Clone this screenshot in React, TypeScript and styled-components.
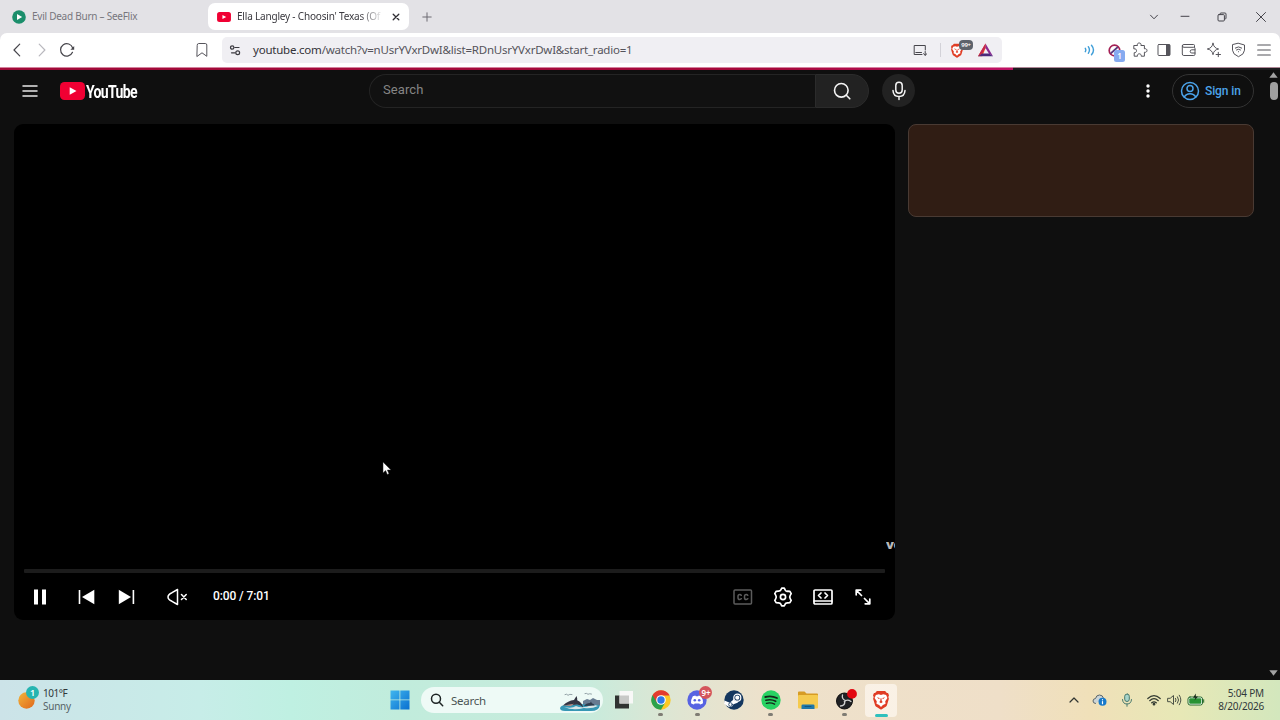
import React from "react";
import styled, { createGlobalStyle, css } from "styled-components";

const GlobalStyle = createGlobalStyle`
  * { box-sizing: border-box; }
  html, body { margin: 0; padding: 0; background: #0f0f0f; overflow: hidden; }
`;

const uiFont = `"Noto Sans", "Open Sans", sans-serif`;
const webFont = `Roboto, "Liberation Sans", sans-serif`;

const Screen = styled.div`
  width: 1280px;
  height: 720px;
  display: flex;
  flex-direction: column;
  overflow: hidden;
  font-family: ${uiFont};
`;

const Glyph = styled.svg<{ $ml?: number }>`
  display: block;
  flex: none;
  fill: none;
  stroke-linecap: round;
  stroke-linejoin: round;
  margin-left: ${(p) => p.$ml ?? 0}px;
`;

const Spacer = styled.div`
  flex: 1;
`;

/* Tab strip */
const TabStrip = styled.div`
  height: 33px;
  flex: none;
  background: #e3e2e6;
  display: flex;
  align-items: center;
  padding-right: 14px;
  color: #45444b;
`;

const Tab = styled.div<{ $active?: boolean }>`
  display: flex;
  align-items: center;
  height: 27px;
  flex: none;
  width: ${(p) => (p.$active ? 201 : 196)}px;
  margin-left: ${(p) => (p.$active ? 0 : 12)}px;
  padding: ${(p) => (p.$active ? "0 8px 0 9px" : "0")};
  border-radius: 7px;
  background: ${(p) => (p.$active ? "#fff" : "transparent")};
`;

const TabTitle = styled.div<{ $active?: boolean }>`
  margin: -1px 0 0 6px;
  font-size: 10px;
  line-height: 16px;
  white-space: nowrap;
  color: ${(p) => (p.$active ? "#3a393f" : "#77767d")};
  ${(p) =>
    p.$active
      ? css`
          width: 145px;
          letter-spacing: -0.19px;
          mask-image: linear-gradient(90deg, #000 122px, transparent 147px);
        `
      : css`
          letter-spacing: -0.25px;
        `}
`;

/* Toolbar */
const ToolbarBacking = styled.div`
  height: 34px;
  flex: none;
  background: #e3e2e6;
`;

const Toolbar = styled.div`
  height: 34px;
  background: #fff;
  border-radius: 7px 7px 0 0;
  display: flex;
  align-items: center;
  padding: 0 9px 0 10px;
  color: #55545b;
`;

const AddressBar = styled.div`
  width: 780px;
  height: 26px;
  margin-left: 13px;
  padding: 0 9px 0 7px;
  border-radius: 5px;
  background: #f0eff3;
  display: flex;
  align-items: center;
`;

const Url = styled.div`
  margin-left: 12px;
  font-size: 11.5px;
  line-height: 18px;
  letter-spacing: -0.22px;
  white-space: nowrap;
  color: #55545b;
  b { font-weight: 400; color: #333238; }
`;

const Divider = styled.div`
  width: 1px;
  height: 14px;
  margin-left: 13px;
  background: #d3d2d8;
`;

const BadgeHost = styled.div<{ $ml: number }>`
  position: relative;
  flex: none;
  margin-left: ${(p) => p.$ml}px;
`;

const CountBadge = styled.span<{ $kind: "shield" | "extension" | "chat" | "weather" }>`
  position: absolute;
  display: flex;
  align-items: center;
  justify-content: center;
  color: #fff;
  font-weight: 600;
  ${(p) =>
    ({
      shield: css`left: 9px; top: -3px; width: 14px; height: 10px; border-radius: 4px; background: #5d626b; font-size: 6px; letter-spacing: -0.3px;`,
      extension: css`left: 6px; top: 6px; width: 11px; height: 12px; border-radius: 2.5px; background: #86aaf0; font-size: 8px;`,
      chat: css`left: 12px; top: -4px; width: 13px; height: 13px; border-radius: 50%; background: #d4555b; font-size: 8px; letter-spacing: -0.3px;`,
      weather: css`left: 8px; top: -6px; width: 13px; height: 13px; border-radius: 50%; background: #26b5b1; font-size: 9px;`,
    })[p.$kind]}
`;

/* Web page */
const LoadLine = styled.div`
  height: 3px;
  flex: none;
  background: linear-gradient(90deg, #a00a38 0, #a6093b 780px, #bf1266 1013px, #1d1c1f 1013px);
  border-top: 1px solid rgba(235, 180, 200, 0.7);
`;

const Page = styled.main`
  height: 610px;
  flex: none;
  background: #0f0f0f;
  display: flex;
  font-family: ${webFont};
  color: #fff;
`;

const Content = styled.div`
  width: 1267px;
  display: flex;
  flex-direction: column;
`;

const Masthead = styled.header`
  height: 54px;
  flex: none;
  display: flex;
  align-items: flex-start;
  padding: 4px 13px 0 22px;
`;

const MastheadRow = styled.div`
  height: 33px;
  width: 100%;
  display: flex;
  align-items: center;
`;

const Brand = styled.div`
  display: flex;
  align-items: center;
  width: 100px;
  margin-left: 22px;
`;

const BrandName = styled.span`
  margin: 2px 0 0 1px;
  font-family: Roboto, sans-serif;
  font-weight: 700;
  font-size: 18.5px;
  line-height: 22px;
  letter-spacing: -0.9px;
  transform: scaleX(0.76);
  transform-origin: left center;
`;

const SearchField = styled.div`
  width: 446px;
  height: 34px;
  margin-left: 209px;
  padding-left: 13px;
  border: 1px solid #242424;
  border-right: 0;
  border-radius: 17px 0 0 17px;
  background: #111;
  color: #858585;
  font-size: 13px;
  line-height: 30px;
  letter-spacing: 0.1px;
`;

const SearchButton = styled.div`
  width: 54px;
  height: 34px;
  border: 1px solid #2b2b2b;
  border-radius: 0 17px 17px 0;
  background: #222;
  display: flex;
  align-items: center;
  justify-content: center;
`;

const MicButton = styled.div`
  width: 33px;
  height: 33px;
  margin-left: 13px;
  border-radius: 50%;
  background: #222;
  display: flex;
  align-items: center;
  justify-content: center;
`;

const SignIn = styled.div`
  width: 82px;
  height: 34px;
  margin-left: 22px;
  padding-left: 7px;
  border: 1px solid #333;
  border-radius: 17px;
  display: flex;
  align-items: center;
  gap: 5px;
  color: #4ba3ea;
  font-size: 12px;
  font-weight: 500;
  letter-spacing: -0.1px;
`;

const Columns = styled.div`
  display: flex;
  padding-left: 14px;
  gap: 13px;
`;

const Player = styled.section`
  width: 881px;
  height: 496px;
  border-radius: 9px;
  background: #000;
  overflow: hidden;
  display: flex;
  flex-direction: column;
  justify-content: flex-end;
  padding: 0 10px;
`;

const Watermark = styled.div`
  width: 9px;
  height: 14px;
  align-self: flex-end;
  margin: 0 -10px 17px 0;
  overflow: hidden;
  white-space: nowrap;
  color: #b9b9b9;
  font: 800 13px/13px "Open Sans", sans-serif;
  letter-spacing: -0.5px;
`;

const SeekBar = styled.div`
  height: 4px;
  flex: none;
  border-radius: 1px;
  background: #1c1c1c;
`;

const Controls = styled.div`
  height: 47px;
  flex: none;
  display: flex;
  align-items: center;
  padding: 0 14.5px 0 9px;
`;

const Time = styled.span`
  margin: -1px 0 0 26.5px;
  font-size: 12px;
  font-weight: 500;
  letter-spacing: -0.12px;
`;

const Placeholder = styled.aside`
  width: 346px;
  height: 93px;
  border-radius: 8px;
  border: 1px solid #493a33;
  background: #301d14;
`;

const Scrollbar = styled.div`
  width: 13px;
  display: flex;
  flex-direction: column;
  align-items: center;
  padding: 2px 0 4px;
`;

const Thumb = styled.div`
  width: 8px;
  height: 18px;
  margin-top: 4px;
  border-radius: 4px;
  background: #9f9f9f;
`;

const Pointer = styled.svg`
  position: absolute;
  left: 382px;
  top: 461px;
`;

/* Taskbar */
const Taskbar = styled.footer`
  height: 40px;
  flex: none;
  display: flex;
  align-items: center;
  padding: 0 16px 0 18px;
  background: linear-gradient(90deg, #cce3e8 0, #c7ede8 200px, #bff0e2 290px, #c1ecdc 400px, #c8ebdc 590px, #e0e5d2 680px, #eee1cb 770px, #efdfc8 1000px, #f0e0b9 1090px, #e7e8b6 1180px, #d3e7bd 1280px);
  color: #30383a;
`;

const Weather = styled.div`
  margin-left: 8px;
  width: 312px;
  font-size: 10px;
  line-height: 13.5px;
  letter-spacing: -0.5px;
  div + div { color: #566366; letter-spacing: -0.25px; }
`;

const TaskSearch = styled.div`
  width: 182px;
  height: 26px;
  margin-left: 11.5px;
  padding-left: 9px;
  border-radius: 13px;
  background: #eefaf6;
  display: flex;
  align-items: center;
  overflow: hidden;
  font-size: 11.5px;
  letter-spacing: -0.25px;
  color: #4b5554;
  span { margin-left: 7px; width: 108px; }
`;

const AppSlot = styled.div<{ $state?: "open" | "focused" }>`
  position: relative;
  width: 32px;
  height: 33px;
  margin-left: 4.8px;
  flex: none;
  display: flex;
  align-items: center;
  justify-content: center;
  border-radius: 4px;
  background: ${(p) => (p.$state === "focused" ? "rgba(255,250,245,.65)" : "transparent")};
  &::after {
    content: "";
    position: absolute;
    bottom: ${(p) => (p.$state === "focused" ? 0 : 1)}px;
    height: 2.5px;
    border-radius: 2px;
    width: ${(p) => (p.$state === "focused" ? 13 : p.$state === "open" ? 5 : 0)}px;
    background: ${(p) => (p.$state === "focused" ? "#2fc0bd" : "#7f7c74")};
  }
`;

const Clock = styled.div`
  width: 59px;
  white-space: nowrap;
  font-size: 10px;
  line-height: 13.5px;
  letter-spacing: -0.2px;
  display: flex;
  flex-direction: column;
  align-items: flex-end;
`;

type IconProps = {
  w?: number;
  h?: number;
  box?: string;
  ml?: number;
  c?: string;
  sw?: number;
  children: React.ReactNode;
};

const Icon = ({ w = 16, h = 16, box, ml, c = "currentColor", sw = 1, children }: IconProps) => (
  <Glyph width={w} height={h} viewBox={box ?? `0 0 ${w} ${h}`} $ml={ml} stroke={c} strokeWidth={sw}>
    {children}
  </Glyph>
);

const lionFace = (
  <>
    <path d="M4.3 1h7.4l1.6 1.8 1-.1.9 2.1-.6 1.5.5 1.6-1.7 5.5c-.3.9-.8 1.3-1.6 1.9L8.7 17.4c-.5.3-.9.3-1.4 0l-3.1-2.1c-.8-.6-1.3-1-1.6-1.9L.9 7.9l.5-1.6L.8 4.8l.9-2.1 1 .1z" fill="#e03c24" stroke="none" />
    <path d="M3.4 4.5 6 3.8l2 .7 2-.7 2.6.7 1.2 2.7-2 3 .3 2.2-2.4 1.2L8 15.2l-1.7-1.6-2.4-1.2.3-2.2-2-3z" fill="#fff" stroke="none" />
    <path d="M4.2 6.6 6.8 7.2 6.3 8.3zM11.8 6.6 9.2 7.2l.5 1.1zM7.6 7.5h.8L8.7 10l.9.8L8 12l-1.600-1.200.9-.8z" fill="#e03c24" stroke="none" />
  </>
);

const tubeBadge = (
  <>
    <rect x="0" y="0" width="25" height="18" rx="4.5" fill="#f00033" stroke="none" />
    <path d="M9.7 5.2v7.600l6.800-3.800z" fill="#fff" stroke="none" />
  </>
);

function BrowserChrome() {
  return (
    <>
      <TabStrip>
        <Tab>
          <Icon w={14} h={14}>
            <circle cx="7" cy="7" r="6.8" fill="#1b8e6b" stroke="none" />
            <path d="M5 4v6l5.2-3z" fill="#fff" stroke="none" />
          </Icon>
          <TabTitle>Evil Dead Burn – SeeFlix</TabTitle>
        </Tab>
        <Tab $active>
          <Icon w={14} h={10} box="0 0 25 18">{tubeBadge}</Icon>
          <TabTitle $active>Ella Langley - Choosin' Texas (Of</TabTitle>
          <Icon w={8} h={8} ml={9.5} c="#2e2d33" sw={1.3}><path d="M1.2 1.2l5.6 5.6M6.8 1.2 1.2 6.8" /></Icon>
        </Tab>
        <Icon w={10} h={10} ml={13} c="#6c6b72"><path d="M5 .8v8.4M.8 5h8.4" /></Icon>
        <Spacer />
        <Icon w={10} h={8}><path d="M1.5 2.2 5 5.8l3.5-3.6" /></Icon>
        <Icon w={10} h={10} ml={21}><path d="M1 4.3h8" /></Icon>
        <Icon w={10} h={10} ml={27}>
          <rect x="1" y="2.6" width="6.4" height="6.4" rx="1" />
          <path d="M3 2.4V2q0-1 1-1h4q1 0 1 1v4.2q0 .8-1 .9" />
        </Icon>
        <Icon w={10} h={10} ml={29}><path d="M.5.5l9 9M9.5.5l-9 9" /></Icon>
      </TabStrip>
      <ToolbarBacking>
        <Toolbar>
          <Icon w={14} h={14} sw={1.2} c="#46454b"><path d="M9.7 1.2 4 7l5.7 5.8" /></Icon>
          <Icon w={14} h={14} ml={11} sw={1.2} c="#b9b8be"><path d="M4.2 1.2 9.9 7l-5.7 5.8" /></Icon>
          <Icon w={16} h={16} ml={10} sw={1.2} c="#46454b">
            <path d="M13.5 10.3A6.2 6.2 0 1 1 13.7 6" />
            <path d="M15.2 4v3.8h-3.8z" fill="#46454b" stroke="none" />
          </Icon>
          <Icon w={14} h={16} ml={120}><path d="M2.2 3q0-1.500 1.500-1.500h6.600q1.500 0 1.500 1.500v11.300L7 10.800l-4.800 3.500z" /></Icon>
          <AddressBar>
            <Icon w={12} h={12} sw={1.2} c="#3c3b41">
              <circle cx="3.2" cy="3.5" r="1.7" /><path d="M5.8 3.5H10" />
              <circle cx="8.7" cy="8.8" r="1.9" /><path d="M2.5 8.8h3.5" />
            </Icon>
            <Url><b>youtube.com</b>/watch?v=nUsrYVxrDwI&amp;list=RDnUsrYVxrDwI&amp;start_radio=1</Url>
            <Spacer />
            <Icon w={14} h={12} c="#46454b">
              <path d="M12.3 6V1.5H1.2v9H9M2.8 8.500h5.700M12.2 7.5v3.7M10.5 9.700l1.700 1.600 1.700-1.600" />
            </Icon>
            <Divider />
            <BadgeHost $ml={9}>
              <Icon w={14} h={15} box="0 0 16 18">{lionFace}</Icon>
              <CountBadge $kind="shield">99+</CountBadge>
            </BadgeHost>
            <Icon w={15} h={14} ml={14}>
              <path d="M7.5.5 0 13.3h4.2L7.5 5.3z" fill="#ee4a26" stroke="none" />
              <path d="M7.5.5 15 13.3 11 10.7 7.5 5z" fill="#8b2a92" stroke="none" />
              <path d="M0 13.3h15l-4-2.800H4z" fill="#4b2a7c" stroke="none" />
              <path d="M7.5.5 0 13.3l4-2.800L7.600 4.500z" fill="#c3274f" stroke="none" />
            </Icon>
          </AddressBar>
          <Spacer />
          <Icon w={12} h={12} c="#3f9ed8" sw={1.4}>
            <path d="M1.300 4.300q1 1.700 0 3.400M4.300 2.700q2.300 3.300 0 6.600M7.500 1.200q4 4.800 0 9.600" />
          </Icon>
          <BadgeHost $ml={12.5}>
            <Icon w={13} h={13} c="#a52055" sw={1.7}>
              <circle cx="6.5" cy="6.5" r="5.3" />
              <path d="M3.2 9 9.3 3.5" stroke="#5b3b7e" />
            </Icon>
            <CountBadge $kind="extension">1</CountBadge>
          </BadgeHost>
          <Icon w={16} h={16} ml={10.5}>
            <path d="M2.200 3.500h3.300C4.900 1.800 6 1 7.200 1s2.300.8 1.700 2.500h3.500v3.300c1.500-.5 2.600.5 2.600 1.700s-1.100 2.200-2.600 1.700v4H9.200c.4-1.500-.7-2.400-1.900-2.400s-2.200.9-1.800 2.400H2.200v-3.500c1.500.3 2.300-.8 2.300-2s-.8-2.200-2.300-1.900z" />
          </Icon>
          <Icon w={14} h={14} ml={9}>
            <rect x="1" y="1.5" width="12" height="11" rx="1" />
            <rect x="9" y="1.5" width="4" height="11" fill="currentColor" stroke="none" />
          </Icon>
          <Icon w={16} h={14} ml={10}>
            <path d="M13.500 4V2.500Q13.500 1.500 12.500 1.500H3Q1.300 1.500 1.300 3v8q0 1.500 1.500 1.500h10q1.200 0 1.200-1.200V5.500q0-1.200-1.200-1.200H3Q1.300 4.300 1.300 3" />
            <path d="M14 6.800h-3.200q-1.600 0-1.600 1.600t1.600 1.600H14" />
          </Icon>
          <Icon w={16} h={16} ml={9}>
            <path d="M7 1.300q.7 4.900 5.600 5.700Q7.700 7.800 7 12.700 6.300 7.800 1.300 7 6.300 6.200 7 1.300zM12.300 10.300v4.400M10.100 12.500h4.400" />
          </Icon>
          <Icon w={15} h={16} ml={9.5}>
            <path d="M7.500 1.300 13.500 3v5.200q0 4-6 6.500-6-2.500-6-6.500V3z" />
            <path d="M4.300 6q3.200-2.400 6.400 0M5.500 7.900q2-1.500 4 0M7.500 9.700v.1" />
          </Icon>
          <Icon w={14} h={12} ml={11} sw={1.2}><path d="M.7 1h12.6M.7 6h12.6M.7 11h12.6" /></Icon>
        </Toolbar>
      </ToolbarBacking>
    </>
  );
}

function WatchPage() {
  return (
    <Page>
      <Content>
        <Masthead>
          <MastheadRow>
            <Icon w={16} h={12} sw={1.5} c="#e8e8e8"><path d="M1 1h14M1 6h14M1 11h14" /></Icon>
            <Brand>
              <Icon w={25} h={18}>{tubeBadge}</Icon>
              <BrandName>YouTube</BrandName>
            </Brand>
            <SearchField>Search</SearchField>
            <SearchButton>
              <Icon w={20} h={20} sw={1.6} c="#f4f4f4"><circle cx="9.3" cy="9.3" r="6.8" /><path d="M14.3 14.300l3.500 3.500" /></Icon>
            </SearchButton>
            <MicButton>
              <Icon w={16} h={20} sw={1.5} c="#f4f4f4"><rect x="4.8" y="1.3" width="6.4" height="11" rx="3.2" /><path d="M2 9.500q.3 6 6 6t6-6M8 15.500v3" /></Icon>
            </MicButton>
            <Spacer />
            <Icon w={4} h={16}>
              <g fill="#fff" stroke="none"><circle cx="2" cy="3" r="1.7" /><circle cx="2" cy="8" r="1.7" /><circle cx="2" cy="13" r="1.7" /></g>
            </Icon>
            <SignIn>
              <Icon w={20} h={20} sw={1.5}><circle cx="10" cy="10" r="8.5" /><circle cx="10" cy="7.5" r="3" /><path d="M4.300 16q1.700-3.300 5.700-3.300t5.700 3.300" /></Icon>
              Sign in
            </SignIn>
          </MastheadRow>
        </Masthead>
        <Columns>
          <Player>
            <Watermark>ve</Watermark>
            <SeekBar />
            <Controls>
              <Icon w={14} h={16}><path d="M1 .5h4v15H1zM9 .5h4v15H9z" fill="#fff" stroke="none" /></Icon>
              <Icon w={17} h={16} ml={31}><path d="M1.500 1v14" stroke="#fff" strokeWidth="1.6" strokeLinecap="butt" /><path d="M16.300.8v14.400L4 8z" fill="#fff" stroke="none" /></Icon>
              <Icon w={17} h={16} ml={23}><path d="M15.400 1v14" stroke="#fff" strokeWidth="1.6" strokeLinecap="butt" /><path d="M.8.8v14.400L13 8z" fill="#fff" stroke="none" /></Icon>
              <Icon w={20} h={18} ml={31.5} c="#fff" sw={1.5}><path d="M10.500 1.500v15L5 13.300Q1 11.500 1 9t4-4.300zM14.500 6.500l4.700 5M19.200 6.500l-4.700 5" /></Icon>
              <Time>0:00 / 7:01</Time>
              <Spacer />
              <Icon w={20} h={16} c="#5c5c5c" sw={1.5}><rect x="1" y="1" width="17.5" height="14" rx="1" /><path d="M8.300 6.300Q7.800 5.500 6.800 5.500 5 5.500 5 7.300v1.400q0 1.800 1.800 1.800 1 0 1.500-.8M14.800 6.300q-.5-.8-1.500-.8-1.800 0-1.800 1.800v1.400q0 1.800 1.800 1.800 1 0 1.500-.8" /></Icon>
              <Icon w={20} h={20} ml={20} c="#fff" sw={1.7}><path d="M8 2.600 8.700 1.200h2.600l.7 1.400q.3 1.300 1.700 1.700l1.200-.2 2 .2 1.300 2.300-.9 1.600q-1.200 1.800 0 3.600l.9 1.600-1.300 2.300-2 .2q-2.300-.2-2.900 1.500l-.7 1.400H8.700L8 17.400q-.7-1.700-2.900-1.500l-2-.2-1.300-2.300.9-1.600q1.200-1.800 0-3.600l-.9-1.600 1.300-2.300 2-.2Q7.300 4.300 8 2.600z" /><circle cx="10" cy="10" r="2.6" /></Icon>
              <Icon w={20} h={16} ml={20} c="#fff" sw={1.7}><rect x="1" y="1" width="18" height="14" rx="1" /><path d="M1 12h18M8 4 5.500 6.500 8 9M12 4l2.500 2.500L12 9" /></Icon>
              <Icon w={16} h={16} ml={22} c="#fff" sw={1.7}><path d="M1.200 5.800V1.200h4.600M1.200 1.200l5.300 5.300M14.800 10.200v4.600h-4.600M14.800 14.800 9.500 9.500" /></Icon>
            </Controls>
          </Player>
          <Placeholder />
        </Columns>
      </Content>
      <Scrollbar>
        <Icon w={9} h={6}><path d="M4.5.3 8.7 5.800H.3z" fill="#a3a3a3" stroke="none" /></Icon>
        <Thumb />
        <Spacer />
        <Icon w={9} h={6}><path d="M.3.2h8.400L4.500 5.700z" fill="#a3a3a3" stroke="none" /></Icon>
      </Scrollbar>
    </Page>
  );
}

function SystemTaskbar() {
  return (
    <Taskbar>
      <BadgeHost $ml={0}>
        <Icon w={17} h={17}>
          <defs><linearGradient id="sun" x1="0" y1="0" x2="1" y2="1"><stop offset="0" stopColor="#f2b53b" /><stop offset="1" stopColor="#e0671b" /></linearGradient></defs>
          <circle cx="8.5" cy="8.5" r="8.2" fill="url(#sun)" stroke="none" />
        </Icon>
        <CountBadge $kind="weather">1</CountBadge>
      </BadgeHost>
      <Weather><div>101°F</div><div>Sunny</div></Weather>
      <Icon w={20} h={20} ml={34.5}>
        <defs><linearGradient id="pane" x1="0" y1="0" x2="1" y2="1"><stop offset="0" stopColor="#41b6ee" /><stop offset="1" stopColor="#0a6fd0" /></linearGradient></defs>
        <path d="M.5.5h9v9h-9zM10.300.5h9.200v9h-9.200zM.5 10.300h9v9.200h-9zM10.300 10.300h9.200v9.200h-9.200z" fill="url(#pane)" stroke="none" />
      </Icon>
      <TaskSearch>
        <Icon w={14} h={14} c="#1d2424" sw={1.5}><circle cx="6" cy="5.8" r="4.5" /><path d="M9.300 9.300l3.400 3.400" /></Icon>
        <span>Search</span>
        <Icon w={43} h={26}>
          <path d="M24 14l4-2 3 1 3-2 4 2 3 0v5l-17 2z" fill="#677b91" stroke="none" />
          <path d="M1 21q1-3 6-3l13-1 21 1q-1 6-9 6H6q-5 0-5-3z" fill="#3697b4" stroke="none" />
          <path d="M5 20q8 2 12-1 6 3 16-1 4 0 6 1-6 3-14 2Q14 24 5 20z" fill="#d9e6e8" stroke="none" />
          <path d="M4 18.500q5-5 11-5.500l2.500-4q1 2 .7 4.300 5 2.200 6 7.200-3-3-6-3-6 1-14.200 1z" fill="#343543" stroke="none" />
          <path d="M5 18.500q6-1 10-1.700l-3 2.200z" fill="#b78d86" stroke="none" />
          <path d="M25 19q2-3 6-3l1-1.500.8 1.700q2 .5 3 2.300z" fill="#2f3b4d" stroke="none" />
          <path d="M6 7.500q2-1 3 .8 1.500-1.500 4-.8M26 6.500q2-.6 3 .8 1.500-1 3.500-.3" stroke="#88969d" strokeWidth=".9" />
        </Icon>
      </TaskSearch>
      <AppSlot>
        <Icon w={20} h={20}><rect x="1" y="5.5" width="14" height="13" fill="#303331" stroke="none" /><rect x="5.5" y="1" width="13.5" height="12.5" fill="#f8f8f7" stroke="none" /><path d="M5.500 5.500H15v8H5.500z" fill="#c8c9c7" stroke="none" /></Icon>
      </AppSlot>
      <AppSlot $state="open">
        <Icon w={20} h={20}>
          <g stroke="none">
            <circle cx="10" cy="10" r="9.7" fill="#fbc924" />
            <path d="M1.600 5.100A9.700 9.700 0 0 0 10 19.700L14.200 12.400 10 10z" fill="#2ba24c" />
            <path d="M1.600 5.100A9.700 9.700 0 0 1 18.400 5.100L18.500 5.500H10v5L5.800 12.400z" fill="#e33b2e" />
            <circle cx="10" cy="10" r="4.8" fill="#fff" /><circle cx="10" cy="10" r="3.7" fill="#2f78e8" />
          </g>
        </Icon>
      </AppSlot>
      <AppSlot $state="open">
        <BadgeHost $ml={0}>
          <Icon w={20} h={20}>
            <circle cx="10" cy="10" r="9.7" fill="#5763e2" stroke="none" />
            <path d="M5.800 6.200 8.300 5.400l.5.900h2.400l.5-.9 2.500.8q2 3.300 1.800 7-1.300 1-2.900 1.400l-.8-1.200H7.700l-.8 1.200Q5.300 14.200 4 13.200q-.2-3.700 1.800-7z" fill="#fff" stroke="none" />
            <g fill="#5763e2" stroke="none"><circle cx="7.8" cy="10.3" r="1.3" /><circle cx="12.2" cy="10.3" r="1.3" /></g>
          </Icon>
          <CountBadge $kind="chat">9+</CountBadge>
        </BadgeHost>
      </AppSlot>
      <AppSlot>
        <Icon w={20} h={20}>
          <circle cx="10" cy="10" r="9.7" fill="#14375f" stroke="none" />
          <path d="M.4 10.500 5.800 12.800 9 10l1.500-3.500h4l1.500 3-2.500 3.300-4 1.500-1.500 2.200-3 .5-3-1.700-1.900-1.500Q.6 12.500.4 10.500z" fill="#fff" stroke="none" />
          <circle cx="13.3" cy="7.7" r="3.5" fill="#14375f" stroke="#fff" strokeWidth="1.2" />
          <circle cx="13.3" cy="7.7" r="2.1" fill="#fff" stroke="none" />
          <circle cx="6.5" cy="14.5" r="1.8" stroke="#14375f" strokeWidth=".8" />
        </Icon>
      </AppSlot>
      <AppSlot $state="open">
        <Icon w={20} h={20}>
          <circle cx="10" cy="10" r="9.7" fill="#28d263" stroke="none" />
          <path d="M4.300 7q6-1.700 11.600 1" stroke="#14291b" strokeWidth="1.9" />
          <path d="M4.900 10.300q5.300-1.400 9.800 1" stroke="#14291b" strokeWidth="1.6" />
          <path d="M5.400 13.300q4.400-1.100 8.200.9" stroke="#14291b" strokeWidth="1.3" />
        </Icon>
      </AppSlot>
      <AppSlot>
        <Icon w={20} h={18}>
          <path d="M0 1.500Q0 .5 1 .5h5.500l2 2H19q1 0 1 1V9H0z" fill="#d79c24" stroke="none" />
          <rect y="4" width="20" height="13.5" rx="1" fill="#f5ca4e" stroke="none" />
          <path d="M3.500 18v-3.200q0-1.300 1.300-1.300h10.400q1.300 0 1.300 1.300V18z" fill="#1e78ab" stroke="none" />
          <path d="M7 15.500h6" stroke="#145680" />
        </Icon>
      </AppSlot>
      <AppSlot $state="open">
        <Icon w={24} h={22}>
          <circle cx="11.5" cy="12" r="8" fill="#202124" stroke="#111" />
          <path d="M9.500 6q-1 4 3 5.500M18 12.500q-4-2.800-6.700.3M7.500 17q4.500-.3 4.300-4.500" stroke="#d2d2d2" strokeWidth="1.3" />
          <circle cx="19" cy="4.9" r="4.9" fill="#e30711" stroke="none" />
        </Icon>
      </AppSlot>
      <AppSlot $state="focused">
        <Icon w={18} h={20} box="0 0 16 18">{lionFace}</Icon>
      </AppSlot>
      <Spacer />
      <Icon w={10} h={8} c="#303532" sw={1.2}><path d="M1 6 5 2l4 4" /></Icon>
      <Icon w={16} h={14} ml={13}>
        <path d="M3.500 10.500Q1 10.300 1 8t2.500-2.500Q4.300 2 7.500 2t4 3" fill="#cbd4d6" stroke="#59656b" />
        <circle cx="10.5" cy="8.8" r="4" fill="#187acb" stroke="none" />
        <path d="M10.500 8.500v2.200M10.500 6.700v.1" stroke="#fff" strokeWidth="1.2" />
      </Icon>
      <Icon w={12} h={14} ml={13} c="#47796d"><rect x="3.7" y="1" width="4.6" height="7.5" rx="2.3" fill="#a7d4cb" /><path d="M1.500 6.500q.2 4.500 4.500 4.500t4.500-4.500M6 11v2.300" /></Icon>
      <Icon w={14} h={12} ml={14} c="#333b31" sw={1.2}><path d="M.8 4.500q6.200-5.700 12.400 0M2.700 6.700q4.300-4 8.600 0M4.700 8.800q2.300-2 4.600 0" /><circle cx="7" cy="10.2" r=".8" fill="#333b31" /></Icon>
      <Icon w={15} h={12} ml={6} c="#4a5145"><path d="M1 4.300h2.200L6.500 1.500v9L3.200 7.700H1zM8.500 4.300q1.300 1.700 0 3.400M10.500 2.800q2.300 3.200 0 6.400M12.300 1.200q3.300 4.800 0 9.600" /></Icon>
      <Icon w={18} h={14} ml={5}>
        <rect x="1" y="4" width="14.5" height="8" rx="2" fill="#fff" stroke="#25682d" />
        <rect x="2.2" y="5.2" width="12.1" height="5.6" rx="1" fill="#289334" stroke="none" />
        <path d="M16.700 6.700v2.600" stroke="#25682d" />
        <path d="M8.800.5 6 4.700h2.300L7.500 7.500l3.500-4H8.800z" fill="#162b19" stroke="none" />
      </Icon>
      <Clock><span>5:04 PM</span><span>8/20/2026</span></Clock>
    </Taskbar>
  );
}

export default function App() {
  return (
    <Screen>
      <GlobalStyle />
      <BrowserChrome />
      <LoadLine />
      <WatchPage />
      <SystemTaskbar />
      <Pointer width="10" height="15" viewBox="0 0 10 15">
        <path d="M1 1v11l2.600-2.400L5.300 13.500l1.700-.8-1.600-3.700H9z" fill="#fff" stroke="#222" strokeWidth=".5" />
      </Pointer>
    </Screen>
  );
}
